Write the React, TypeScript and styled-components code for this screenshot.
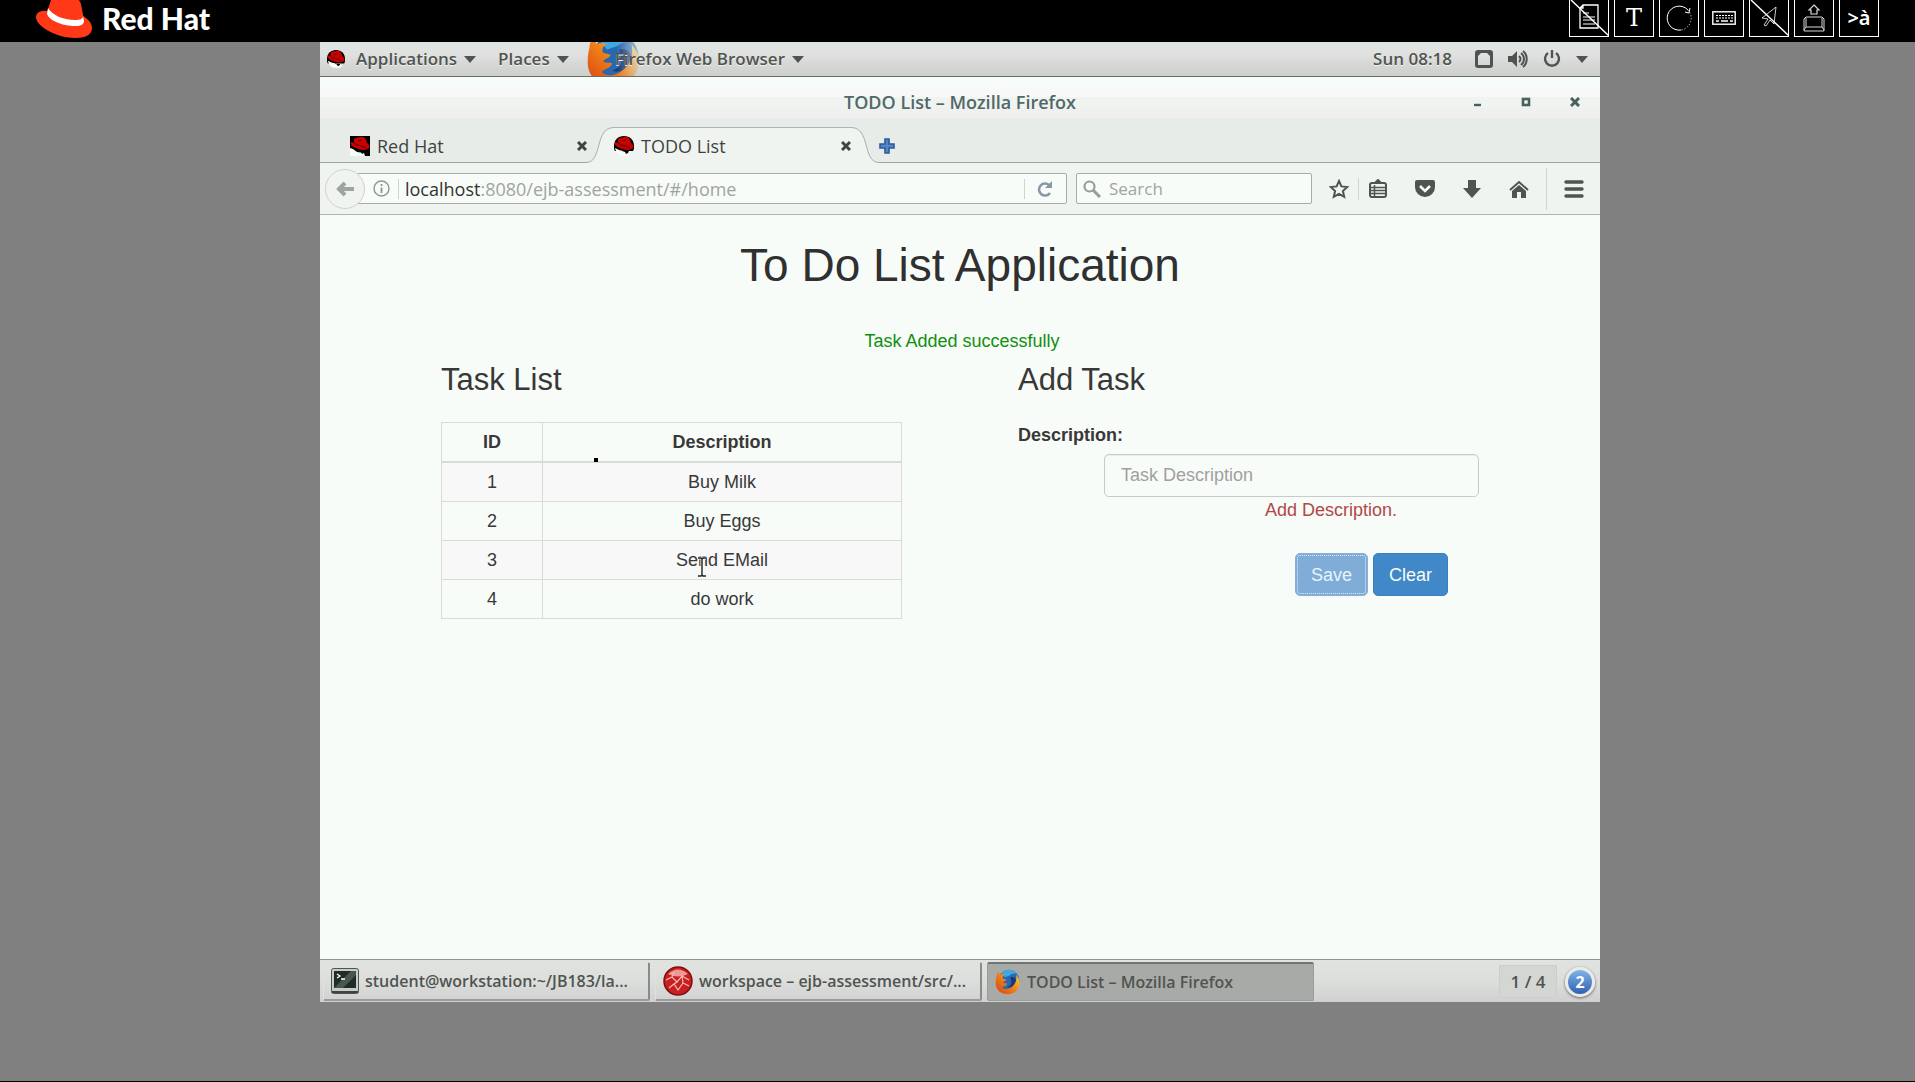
import React from "react";
import styled, { createGlobalStyle, css } from "styled-components";

const ui = `"Open Sans", "Noto Sans", sans-serif`;
const web = `"Liberation Sans", Arial, sans-serif`;

const GlobalStyle = createGlobalStyle`
  * { box-sizing: border-box; }
  body { margin: 0; background: #808080; font-family: ${ui}; }
  button { font: inherit; color: inherit; background: none; border: 0; padding: 0; margin: 0; }
  svg { display: block; flex: none; }
`;

const Page = styled.div`
  min-height: 100vh;
  display: flex;
  flex-direction: column;
  background: #808080;
  border-bottom: 1px solid #000;
`;

/* Viewer header */
const ViewerBar = styled.header`
  height: 42px;
  background: #000;
  display: flex;
  justify-content: space-between;
  padding: 0 36px;
`;
const Brand = styled.a`
  display: flex;
  gap: 8px;
  color: #fff;
  text-decoration: none;
  font: 900 30px/36px Lato, sans-serif;
`;
const ViewerTools = styled.nav`
  display: flex;
  gap: 5px;
`;
const ViewerTool = styled.button`
  && {
    width: 40px;
    height: 37px;
    border: 1px solid #fff;
    border-top: 0;
    color: #fff;
    display: flex;
    align-items: center;
    justify-content: center;
  }
`;
const ToolGlyph = styled.span<{ $serif?: boolean }>`
  font: ${(p) => (p.$serif ? `400 24px/34px "DejaVu Serif", serif` : `600 20px/34px "Noto Sans", sans-serif`)};
`;

/* Remote desktop */
const Stage = styled.main`
  flex: 1;
  display: grid;
  grid-template-columns: 320fr 1280fr 315fr;
  padding-bottom: 79px;
`;
const Desktop = styled.div`
  grid-column: 2;
  position: relative;
  display: flex;
  flex-direction: column;
  background: #f8fcf8;
  overflow: hidden;
`;
const Panel = styled.div`
  height: 35px;
  display: flex;
  align-items: center;
  padding: 0 12px 0 7px;
  color: #505450;
  font-size: 17px;
  font-weight: 600;
  line-height: 24px;
  background: linear-gradient(#e0e4e0 20%, #e0e0e0 40%, #d8d8d8 60%, #cdd0cd);
  border-bottom: 1px solid #686c68;
`;
const PanelMenu = styled.button`
  && {
    display: flex;
    align-items: center;
    gap: 7px;
    margin-right: 22px;
    text-shadow: 0 1px 0 #f0f4f0;
  }
`;
const AppsLabel = styled.span`
  padding-left: 4px;
`;
const FirefoxMenu = styled(PanelMenu)`
  position: relative;
  && { margin-left: 24px; }
`;
const PanelLogo = styled.span`
  position: absolute;
  left: -29px;
  top: -5px;
  width: 56px;
  height: 34px;
  overflow: hidden;
  mask-image: linear-gradient(to right, #000 55%, rgba(0, 0, 0, 0.2));
  svg { margin-top: -10px; }
`;
const Over = styled.span`
  position: relative;
`;
const Tray = styled.div`
  margin-left: auto;
  display: flex;
  align-items: center;
  gap: 15px;
`;
const Clock = styled.time`
  margin-right: 8px;
  text-shadow: 0 1px 0 #f0f4f0;
`;

/* Browser */
const TitleBar = styled.div`
  height: 41px;
  display: grid;
  grid-template-columns: 1fr auto 1fr;
  align-items: center;
  padding: 8px 20px 0;
  background: linear-gradient(#f8fcf8 0 10px, #f8f8f8 10px 20px, #f0f4f0 20px 31px, #f0f0f0 31px);
`;
const WindowTitle = styled.h1`
  grid-column: 2;
  margin: 0;
  font-size: 18px;
  line-height: 24px;
  font-weight: 600;
  color: #506868;
`;
const WindowButtons = styled.div`
  display: flex;
  justify-content: flex-end;
  gap: 39px;
  color: #486060;
`;
const TabStrip = styled.div`
  height: 45px;
  display: flex;
  align-items: flex-end;
  padding-left: 30px;
  background: #e8ece8;
  box-shadow: inset 0 -1px 0 #a0a4a0;
`;
const Tab = styled.div<{ $active?: boolean }>`
  flex: 0 0 237px;
  min-width: 0;
  height: 36px;
  display: flex;
  align-items: center;
  gap: 7px;
  padding-top: 2px;
  font-size: 18px;
  line-height: 24px;
  color: #404440;
  ${(p) =>
    p.$active &&
    css`
      padding-top: 1px;
      background: #f0f4f0;
      border-top: 1px solid #b0b4b8;
    `}
`;
const TabTitle = styled.button`
  && {
    flex: 1;
    text-align: left;
  }
`;
const TabEdge = styled.svg<{ $pull: number }>`
  margin-left: ${(p) => p.$pull}px;
`;
const NewTab = styled.button`
  && { height: 34px; display: flex; align-items: center; }
`;
const Toolbar = styled.div`
  height: 52px;
  display: flex;
  align-items: center;
  padding: 0 16px 0 5px;
  background: #f0f4f0;
  border-bottom: 1px solid #b0b4b0;
  color: #505450;
`;
const BackButton = styled.button`
  && {
    width: 40px;
    height: 40px;
    flex: none;
    position: relative;
    border: 1px solid #d0d0d0;
    border-radius: 50%;
    background: #f0f4f0;
    color: #a0a4a0;
    display: flex;
    align-items: center;
    justify-content: center;
  }
`;
const Field = styled.div`
  height: 31px;
  min-width: 0;
  display: flex;
  align-items: center;
  background: #f8fcf8;
  border: 1px solid #a8aca8;
  border-radius: 2px;
`;
const UrlField = styled(Field)`
  flex: 1;
  margin-left: -8px;
  padding: 0 13px 0 15px;
`;
const SearchField = styled(Field)`
  flex: 0 0 236px;
  margin: 0 17px 0 9px;
  padding: 0 6px;
`;
const FieldRule = styled.span`
  width: 1px;
  height: 20px;
  background: #d0d4d0;
  margin: 0 12px 0 8px;
`;
const UrlText = styled.a`
  flex: 1;
  font-size: 18px;
  line-height: 24px;
  color: #a0a4a0;
  text-decoration: none;
  b { font-weight: 400; color: #303430; }
  margin-left: -6px;
`;
const SearchInput = styled.input`
  flex: 1;
  min-width: 0;
  margin-left: 8px;
  padding: 0;
  border: 0;
  outline: 0;
  background: none;
  font: 400 17px/24px ${ui};
  &::placeholder { color: #a0a4a0; opacity: 1; }
`;
const ToolbarIcons = styled.div`
  display: flex;
  align-items: center;
  gap: 28px;
`;
const ToolRule = styled.span<{ $h: number; $l: number; $r: number }>`
  width: 1px;
  height: ${(p) => p.$h}px;
  background: #d0d4d0;
  margin: 0 ${(p) => p.$r}px 0 ${(p) => p.$l}px;
`;

/* Web page */
const WebPage = styled.article`
  flex: 1;
  padding: 22px 121px;
  font-family: ${web};
  font-size: 18px;
  line-height: 24px;
  color: #383838;
`;
const PageTitle = styled.h2`
  margin: 0;
  font-size: 46px;
  line-height: 56px;
  font-weight: 400;
  text-align: center;
  color: #303030;
`;
const Notice = styled.p`
  margin: 36px 0 0;
  padding-left: 4px;
  text-align: center;
  color: #109010;
`;
const Columns = styled.div`
  display: grid;
  grid-template-columns: 1fr 1fr;
  gap: 116px;
`;
const SectionTitle = styled.h3`
  margin: 9px 0 0;
  font-size: 31px;
  line-height: 36px;
  font-weight: 400;
`;
const TaskTable = styled.table`
  width: 100%;
  margin-top: 24px;
  border-collapse: collapse;
  text-align: center;
  th, td {
    padding: 8px;
    line-height: 22px;
    border: 1px solid #d8dcd8;
  }
  th { border-bottom-width: 2px; }
  th:first-child { width: 101px; }
  tbody tr:nth-child(odd) { background: #f8f8f8; }
`;
const TaskForm = styled.form`
  display: flex;
  flex-direction: column;
`;
const FormLabel = styled.label`
  margin-top: 25px;
  font-weight: 700;
`;
const TaskInput = styled.input`
  height: 43px;
  margin: 7px 0 0 86px;
  padding: 0 16px;
  font: 400 18px/24px ${web};
  background: #f8fcf8;
  border: 1px solid #c8ccc8;
  border-radius: 5px;
  box-shadow: inset 0 1px 1px #e8ece8;
  &::placeholder { color: #a0a0a0; opacity: 1; }
`;
const FieldError = styled.p`
  margin: 1px 0 0;
  padding-left: 165px;
  text-align: center;
  color: #b04848;
`;
const Actions = styled.div`
  display: flex;
  justify-content: flex-end;
  gap: 5px;
  margin-top: 31px;
  padding-right: 31px;
`;
const ActionButton = styled.button<{ $faded?: boolean }>`
  && {
    height: 43px;
    padding: 0 15px;
    color: ${(p) => (p.$faded ? "#e8f4f8" : "#f8fcf8")};
    background: ${(p) => (p.$faded ? "#80acd8" : "#4088c8")};
    border: 1px solid ${(p) => (p.$faded ? "#88b0d8" : "#3880c0")};
    border-radius: 5px;
    ${(p) => p.$faded && "outline: 1px dotted #e0ecf8; outline-offset: -3px;"}
  }
`;

/* Task bar */
const TaskBar = styled.footer`
  height: 43px;
  display: flex;
  align-items: center;
  gap: 5px;
  padding: 2px 5px 1px 3px;
  border-top: 1px solid #909490;
  background: linear-gradient(#e0e4e0, #dcdedc 50%, #d0d0d0);
  color: #505450;
  font-size: 16px;
  line-height: 24px;
  font-weight: 600;
`;
const TaskItem = styled.button<{ $active?: boolean }>`
  && {
    flex: 0 1 327px;
    min-width: 0;
    height: 39px;
    padding: 0 8px 0 7px;
    display: flex;
    align-items: center;
    gap: 6px;
    border: 1px solid #e0e0e0;
    border-right: 2px solid #888c88;
    border-bottom: 2px solid #989c98;
    border-radius: 2px;
    ${(p) =>
      p.$active &&
      css`
        background: #a8aaa8;
        border: 1px solid #989c98;
        border-top: 2px solid #707470;
      `}
  }
`;
const TaskTitle = styled.span`
  white-space: nowrap;
  overflow: hidden;
  text-overflow: ellipsis;
`;
const Pager = styled.span`
  margin-left: auto;
  width: 58px;
  height: 33px;
  display: flex;
  align-items: center;
  justify-content: center;
  border: 1px solid #c8d0cc;
  background: #d4d6d4;
  font-size: 17px;
`;
const Messages = styled.button`
  && {
    width: 30px;
    height: 30px;
    margin-left: 3px;
    border-radius: 50%;
    border: 3px solid #e8ece8;
    color: #fff;
    font-weight: 700;
    line-height: 24px;
    background: linear-gradient(#80b4e8, #3060b0);
    box-shadow: 0 1px 3px #606060;
  }
`;

/* Pointer drawn over the remote screen */
const Pointer = styled.svg`
  position: absolute;
  left: 376px;
  top: 514px;
`;
const PointerDot = styled.span`
  position: absolute;
  left: 274px;
  top: 416px;
  width: 4px;
  height: 4px;
  background: #000;
`;

const BrandHat = () => (
  <svg width="58" height="38" viewBox="0 0 58 38" aria-hidden="true">
    <path fill="#ff3818" d="M12 11C4 10 0 13 0 17c0 10 22 21 39 21 12 0 17-4 17-10 0-5-4-9-9-12z" />
    <path fill="#ff3818" d="M15 0h28l2 4 3 16-6 4-16-3-15-9z" />
    <path fill="#fff" d="M12 8c4 7 15 12 27 12 5 0 8-1 8-4l1 5c0 3-3 5-8 5-15 0-27-6-29-12z" />
  </svg>
);

const Caret = () => (
  <svg width="12" height="8" viewBox="0 0 12 8" aria-hidden="true">
    <path fill="#505450" d="M0 1h12L6 8z" />
  </svg>
);

const Shadowman = ({ size = 18, square = false }: { size?: number; square?: boolean }) => (
  <svg width={size} height={size} viewBox="0 0 20 20" aria-hidden="true">
    {square ? (
      <path fill="#000" d="M0 0h20v20H0z" />
    ) : (
      <path fill="#000" d="M10 0C4 0 0 4 0 10c0 2 0 4 1 5h18c1-1 1-3 1-5 0-6-4-10-10-10z" />
    )}
    <path
      fill="#f8fcf8"
      d={square ? "M0 12l3 1 4 3 7 1 1 3H0z" : "M1 12l4 2 4 1 6 0 2 3c-2 2-4 2-7 2-5 0-8-3-9-8z"}
    />
    <path fill="#c80000" d="M4 3C6 1 8 2 10 1c4-1 6 1 7 6 2 1 3 3 2 5-3 3-9 2-13 0C3 11 0 9 1 6c1 0 2 1 3 1z" />
    <path fill="none" stroke="#500" d="M4 7c3 3 7 2 12 5M8 5l4-1" />
    <path fill="#000" d="M8 15l7 0-1 2-2 1-1-2z" />
  </svg>
);

const FirefoxIcon = ({ size, id }: { size: number; id: string }) => (
  <svg width={size} height={size} viewBox="0 0 32 32" aria-hidden="true">
    <defs>
      <linearGradient id={id} x1="0" y1="1" x2="1" y2="0">
        <stop offset="0" stopColor="#d84010" />
        <stop offset=".5" stopColor="#f08018" />
        <stop offset="1" stopColor="#f8e048" />
      </linearGradient>
    </defs>
    <circle cx="17" cy="14" r="13" fill="#2868b0" />
    <path fill="#40a8e0" d="M8 5c5-6 15-5 19 1-4-1-7 0-9 2l-6 2z" />
    <path fill="#183870" d="M19 10c4-1 8 2 7 6-1 5-7 8-11 6 4-1 6-4 5-7z" />
    <path
      fill={`url(#${id})`}
      d="M2 9c0-3 1-4 3-6l1 4c2-1 4-1 6 0-3 1-3 4-2 5l4 1c0 2-4 2-4 4 1 1 3 0 5 1-1 3-5 3-6 5 3 3 9 2 13-2 4-4 5-9 4-14 3 4 5 7 4 12-1 7-7 12-14 12C7 31 1 25 1 18c0-3 0-6 1-9z"
    />
  </svg>
);

const CloseMark = () => (
  <svg width="10" height="10" viewBox="0 0 10 10" aria-hidden="true">
    <path d="M1 1l8 8M9 1L1 9" stroke="currentColor" strokeWidth="3" />
  </svg>
);

const Slash = () => <path d="M2 0l38 36" stroke="#fff" strokeWidth="1.4" />;

const Notes = () => (
  <svg width="40" height="37" viewBox="0 0 40 37" fill="none" stroke="#fff">
    <path d="M14 5h15v23H11V8z M11 8h3V5" strokeWidth="1.3" />
    <path d="M14 13h6M14 17h12M14 20h12M14 24h12" />
    <Slash />
  </svg>
);
const Ring = () => (
  <svg width="26" height="26" viewBox="0 0 26 26" fill="none" stroke="#fff">
    <path d="M15 25A12 12 0 1 1 22 5" />
    <path d="M22 5a12 12 0 0 1-7 20" strokeDasharray="1 2" />
    <path d="M19 7l4 1 1-5" />
  </svg>
);
const Keyboard = () => (
  <svg width="24" height="14" viewBox="0 0 24 14" fill="none" stroke="#fff">
    <rect x=".8" y=".8" width="22.4" height="12.4" strokeWidth="1.4" />
    <path d="M4 4.5h17M4 7h17" strokeDasharray="2 1" />
    <path d="M4 10h3M9 10h7M18 10h3" strokeWidth="1.5" />
  </svg>
);
const NoPointer = () => (
  <svg width="40" height="37" viewBox="0 0 40 37" fill="none" stroke="#fff">
    <path d="M27 7L13 18l6 1-4 6 2 1 4-6 4 4z" strokeWidth=".8" />
    <Slash />
  </svg>
);
const KeyUp = () => (
  <svg width="24" height="28" viewBox="0 0 24 28" fill="none" stroke="#d8d8d8">
    <path d="M12 1l5 5h-2v4H9V6H7z" strokeWidth="1.2" />
    <path d="M4 13h16l2 2v12H2V15zM4 23h16l2 3M4 23l-2 3M4 14v9M20 14v9" />
  </svg>
);

export default function App() {
  const tasks = ["Buy Milk", "Buy Eggs", "Send EMail", "do work"];
  return (
    <Page>
      <GlobalStyle />
      <ViewerBar>
        <Brand href="#">
          <BrandHat />
          Red Hat
        </Brand>
        <ViewerTools>
          <ViewerTool aria-label="Transcript off"><Notes /></ViewerTool>
          <ViewerTool aria-label="Text"><ToolGlyph $serif>T</ToolGlyph></ViewerTool>
          <ViewerTool aria-label="Reload"><Ring /></ViewerTool>
          <ViewerTool aria-label="Keyboard"><Keyboard /></ViewerTool>
          <ViewerTool aria-label="Pointer off"><NoPointer /></ViewerTool>
          <ViewerTool aria-label="Send key"><KeyUp /></ViewerTool>
          <ViewerTool aria-label="Input language"><ToolGlyph>&gt;à</ToolGlyph></ViewerTool>
        </ViewerTools>
      </ViewerBar>

      <Stage>
        <Desktop>
          <Panel>
            <PanelMenu>
              <Shadowman />
              <AppsLabel>Applications</AppsLabel>
              <Caret />
            </PanelMenu>
            <PanelMenu>
              Places <Caret />
            </PanelMenu>
            <FirefoxMenu>
              <PanelLogo><FirefoxIcon size={56} id="ffPanel" /></PanelLogo>
              <Over>Firefox Web Browser</Over>
              <Caret />
            </FirefoxMenu>
            <Tray>
              <Clock>Sun 08:18</Clock>
              <svg width="18" height="18" viewBox="0 0 18 18" aria-hidden="true">
                <rect x="1.500" y="1.500" width="15" height="15" rx="1.500" fill="none" stroke="#505450" strokeWidth="3" />
                <path d="M3 3h3L3 6zM15 3h-3l3 3z" fill="#505450" />
              </svg>
              <svg width="20" height="18" viewBox="0 0 20 18" fill="none" stroke="#505450" strokeWidth="2" aria-hidden="true">
                <path d="M0 6h4l5-5v16l-5-5H0z" fill="#505450" stroke="none" />
                <path d="M11 6c2 2 2 4 0 6M13 3c4 3 4 9 0 12M15 1c5 4 5 12 0 16" />
              </svg>
              <svg width="18" height="18" viewBox="0 0 18 18" fill="none" stroke="#505450" strokeWidth="2.400" aria-hidden="true">
                <path d="M9 0v8M5 3a7 7 0 1 0 8 0" />
              </svg>
              <Caret />
            </Tray>
          </Panel>

          <TitleBar>
            <WindowTitle>TODO List – Mozilla Firefox</WindowTitle>
            <WindowButtons>
              <button aria-label="Minimize">
                <svg width="9" height="10" viewBox="0 0 9 10"><path d="M1 8h7" stroke="currentColor" strokeWidth="2.400" /></svg>
              </button>
              <button aria-label="Maximize">
                <svg width="10" height="10" viewBox="0 0 10 10"><rect x="2" y="2" width="6" height="6" fill="none" stroke="currentColor" strokeWidth="2.600" /></svg>
              </button>
              <button aria-label="Close window"><CloseMark /></button>
            </WindowButtons>
          </TitleBar>

          <TabStrip>
            <Tab>
              <Shadowman size={20} square />
              <TabTitle>Red Hat</TabTitle>
              <button aria-label="Close Red Hat tab"><CloseMark /></button>
            </Tab>
            <TabEdge $pull={-1} width="28" height="36" viewBox="0 0 28 36" aria-hidden="true">
              <path d="M0 35.5C17 35.5 8 .5 28 .5V36H0z" fill="#f0f4f0" />
              <path d="M0 35.5C17 35.5 8 .5 28 .5" fill="none" stroke="#a8acb0" />
            </TabEdge>
            <Tab $active>
              <Shadowman size={20} />
              <TabTitle>TODO List</TabTitle>
              <button aria-label="Close TODO List tab"><CloseMark /></button>
            </Tab>
            <TabEdge $pull={0} width="28" height="36" viewBox="0 0 28 36" aria-hidden="true">
              <path d="M0 .5C20 .5 11 35.5 28 35.5V36H0z" fill="#f0f4f0" />
              <path d="M0 .5C20 .5 11 35.5 28 35.5" fill="none" stroke="#a8acb0" />
            </TabEdge>
            <NewTab aria-label="New tab">
              <svg width="16" height="16" viewBox="0 0 16 16">
                <path d="M6 1h4v5h5v4h-5v5H6v-5H1V6h5z" fill="#5088c8" stroke="#305898" strokeWidth="1.600" />
              </svg>
            </NewTab>
          </TabStrip>

          <Toolbar>
            <BackButton aria-label="Back">
              <svg width="18" height="16" viewBox="0 0 18 16"><path d="M9 2L3 8l6 6M3 8h15" fill="none" stroke="currentColor" strokeWidth="4" /></svg>
            </BackButton>
            <UrlField>
              <svg width="17" height="17" viewBox="0 0 17 17" aria-hidden="true">
                <circle cx="8.500" cy="8.500" r="7.500" fill="none" stroke="#909490" strokeWidth="1.400" />
                <path d="M8.500 4v2M8.500 7.500V13" stroke="#909490" strokeWidth="1.800" />
              </svg>
              <FieldRule />
              <UrlText href="#/home"><b>localhost</b>:8080/ejb-assessment/#/home</UrlText>
              <FieldRule />
              <button aria-label="Reload page">
                <svg width="16" height="16" viewBox="0 0 16 16"><path d="M12 4a6 6 0 1 0 1 8" fill="none" stroke="#8898a8" strokeWidth="2.600" /><path d="M8 7h7V0z" fill="#8898a8" /></svg>
              </button>
            </UrlField>
            <SearchField>
              <svg width="18" height="18" viewBox="0 0 18 18" fill="none" stroke="#989c98" aria-hidden="true">
                <circle cx="6.500" cy="6.500" r="5" strokeWidth="2.200" />
                <path d="M10 10l7 7" strokeWidth="3" />
              </svg>
              <SearchInput type="search" aria-label="Search" placeholder="Search" />
            </SearchField>
            <button aria-label="Bookmark this page">
              <svg width="20" height="20" viewBox="0 0 20 20"><path d="M10 2l2.400 5.400 5.900.6-4.400 4 1.300 5.800L10 14.800l-5.200 3L6.100 12 1.700 8l5.900-.6z" fill="none" stroke="currentColor" strokeWidth="2" /></svg>
            </button>
            <ToolRule $h={22} $l={9} $r={10} />
            <ToolbarIcons>
              <button aria-label="Show bookmarks">
                <svg width="18" height="19" viewBox="0 0 18 19"><path d="M6 4l3-3 3 3" fill="currentColor" stroke="currentColor" strokeWidth="2" /><rect x="1" y="4" width="16" height="14" rx="2" fill="none" stroke="currentColor" strokeWidth="2" /><path d="M2 8.500h14M2 11.500h14M2 14.500h14M5.500 6v11" stroke="currentColor" strokeWidth="1.500" /></svg>
              </button>
              <button aria-label="Save to Pocket">
                <svg width="20" height="18" viewBox="0 0 20 18"><path d="M2 0h16q2 0 2 2v5a10 10 0 0 1-20 0V2q0-2 2-2z" fill="currentColor" /><path d="M5 6l5 5 5-5" fill="none" stroke="#f8fcf8" strokeWidth="2.600" /></svg>
              </button>
              <button aria-label="Downloads">
                <svg width="18" height="18" viewBox="0 0 18 18"><path d="M5 0h8v8h5l-9 10L0 8h5z" fill="currentColor" /></svg>
              </button>
              <button aria-label="Home">
                <svg width="20" height="18" viewBox="0 0 20 18"><path d="M10 5l7 6v7h-5v-6H8v6H3v-7z" fill="currentColor" /><path d="M1 10l9-8 9 8" fill="none" stroke="currentColor" strokeWidth="2" /></svg>
              </button>
            </ToolbarIcons>
            <ToolRule $h={42} $l={17} $r={17} />
            <button aria-label="Open menu">
              <svg width="20" height="18" viewBox="0 0 20 18"><path d="M2 2h16M2 9h16M2 16h16" stroke="currentColor" strokeWidth="3.400" strokeLinecap="round" /></svg>
            </button>
          </Toolbar>

          <WebPage>
            <PageTitle>To Do List Application</PageTitle>
            <Notice>Task Added successfully</Notice>
            <Columns>
              <section>
                <SectionTitle>Task List</SectionTitle>
                <TaskTable>
                  <thead>
                    <tr><th scope="col">ID</th><th scope="col">Description</th></tr>
                  </thead>
                  <tbody>
                    {tasks.map((task, i) => (
                      <tr key={task}><td>{i + 1}</td><td>{task}</td></tr>
                    ))}
                  </tbody>
                </TaskTable>
              </section>
              <TaskForm onSubmit={(e) => e.preventDefault()}>
                <SectionTitle>Add Task</SectionTitle>
                <FormLabel htmlFor="description">Description:</FormLabel>
                <TaskInput id="description" placeholder="Task Description" />
                <FieldError>Add Description.</FieldError>
                <Actions>
                  <ActionButton type="submit" $faded disabled>Save</ActionButton>
                  <ActionButton type="reset">Clear</ActionButton>
                </Actions>
              </TaskForm>
            </Columns>
          </WebPage>

          <TaskBar>
            <TaskItem>
              <svg width="28" height="26" viewBox="0 0 28 26" aria-hidden="true">
                <rect x=".5" y=".5" width="27" height="25" rx="2" fill="#c8ccc8" stroke="#505450" />
                <rect x="3" y="3" width="22" height="17" fill="#202c28" />
                <path d="M3 20L20 3h5v4L12 20z" fill="#485850" />
                <path d="M6 6l3 2-3 2M10 11h4" fill="none" stroke="#fff" strokeWidth="1.300" />
                <path d="M1 24h26" stroke="#404440" strokeWidth="2" />
              </svg>
              <TaskTitle>student@workstation:~/JB183/la...</TaskTitle>
            </TaskItem>
            <TaskItem>
              <svg width="30" height="30" viewBox="0 0 30 30" aria-hidden="true">
                <circle cx="15" cy="15" r="14" fill="#c82020" stroke="#801010" strokeWidth="1.500" />
                <path d="M5 8q10-9 20 0-10 5-20 0z" fill="#f09898" />
                <path d="M3 14l6-3 5 5 5-6 7 4M6 22l5-4 4 6 5-7 6 3M11 18l3-2M20 17l-1-7M9 11l2-5" fill="none" stroke="#f8b8b8" strokeWidth="1.200" />
              </svg>
              <TaskTitle>workspace – ejb-assessment/src/...</TaskTitle>
            </TaskItem>
            <TaskItem $active>
              <FirefoxIcon size={26} id="ffTask" />
              <TaskTitle>TODO List – Mozilla Firefox</TaskTitle>
            </TaskItem>
            <Pager>1 / 4</Pager>
            <Messages aria-label="2 messages">2</Messages>
          </TaskBar>

          <PointerDot />
          <Pointer width="12" height="22" viewBox="0 0 12 22" aria-hidden="true">
            <path d="M2 2h3l1 1 1-1h3M6 3v16M2 20h3l1-1 1 1h3" fill="none" stroke="#f8fcf8" strokeWidth="3" />
            <path d="M2 2h3l1 1 1-1h3M6 3v16M2 20h3l1-1 1 1h3" fill="none" stroke="#202020" strokeWidth="1.400" />
          </Pointer>
        </Desktop>
      </Stage>
    </Page>
  );
}
